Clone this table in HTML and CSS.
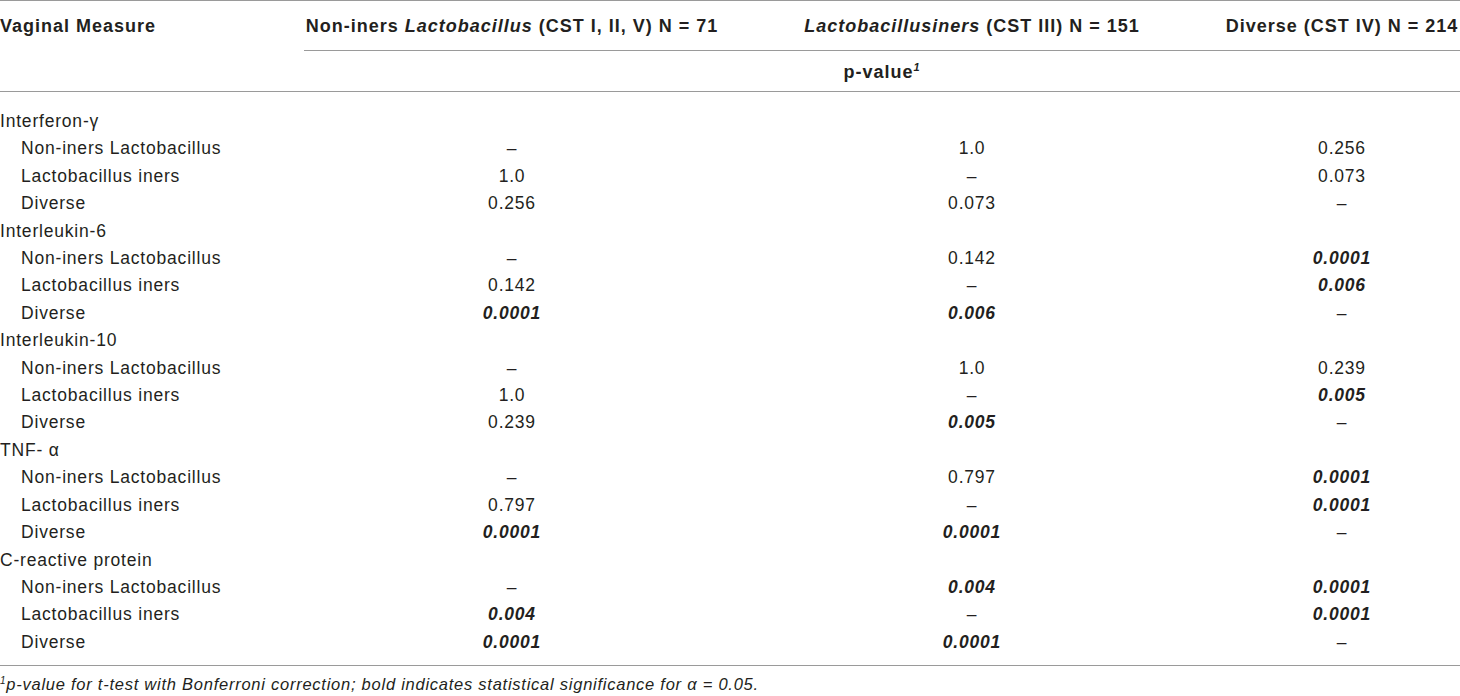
FILE: index.html
```html
<!DOCTYPE html>
<html lang="en">
<head>
    <meta charset="UTF-8">
    <title>Vaginal Measure p-values</title>
    <link rel="stylesheet" href="styles.css">
</head>
<body>
    <table class="pvals">
        <colgroup>
            <col class="col-label">
            <col class="col-a">
            <col class="col-b">
            <col class="col-c">
        </colgroup>
        <thead>
            <tr class="head-groups">
                <th class="label">Vaginal Measure</th>
                <th class="group">Non-iners <i>Lactobacillus</i> (CST I, II, V) N = 71</th>
                <th class="group"><i>Lactobacillusiners</i> (CST III) N = 151</th>
                <th class="group">Diverse (CST IV) N = 214</th>
            </tr>
            <tr class="head-sub">
                <th></th>
                <th colspan="3">p-value<sup>1</sup></th>
            </tr>
        </thead>
        <tbody>
            <tr class="measure first"><td colspan="4">Interferon-&gamma;</td></tr>
            <tr><td class="sub">Non-iners Lactobacillus</td><td>&ndash;</td><td>1.0</td><td>0.256</td></tr>
            <tr><td class="sub">Lactobacillus iners</td><td>1.0</td><td>&ndash;</td><td>0.073</td></tr>
            <tr><td class="sub">Diverse</td><td>0.256</td><td>0.073</td><td>&ndash;</td></tr>

            <tr class="measure"><td colspan="4">Interleukin-6</td></tr>
            <tr><td class="sub">Non-iners Lactobacillus</td><td>&ndash;</td><td>0.142</td><td class="sig">0.0001</td></tr>
            <tr><td class="sub">Lactobacillus iners</td><td>0.142</td><td>&ndash;</td><td class="sig">0.006</td></tr>
            <tr><td class="sub">Diverse</td><td class="sig">0.0001</td><td class="sig">0.006</td><td>&ndash;</td></tr>

            <tr class="measure"><td colspan="4">Interleukin-10</td></tr>
            <tr><td class="sub">Non-iners Lactobacillus</td><td>&ndash;</td><td>1.0</td><td>0.239</td></tr>
            <tr><td class="sub">Lactobacillus iners</td><td>1.0</td><td>&ndash;</td><td class="sig">0.005</td></tr>
            <tr><td class="sub">Diverse</td><td>0.239</td><td class="sig">0.005</td><td>&ndash;</td></tr>

            <tr class="measure"><td colspan="4">TNF- &alpha;</td></tr>
            <tr><td class="sub">Non-iners Lactobacillus</td><td>&ndash;</td><td>0.797</td><td class="sig">0.0001</td></tr>
            <tr><td class="sub">Lactobacillus iners</td><td>0.797</td><td>&ndash;</td><td class="sig">0.0001</td></tr>
            <tr><td class="sub">Diverse</td><td class="sig">0.0001</td><td class="sig">0.0001</td><td>&ndash;</td></tr>

            <tr class="measure"><td colspan="4">C-reactive protein</td></tr>
            <tr><td class="sub">Non-iners Lactobacillus</td><td>&ndash;</td><td class="sig">0.004</td><td class="sig">0.0001</td></tr>
            <tr><td class="sub">Lactobacillus iners</td><td class="sig">0.004</td><td>&ndash;</td><td class="sig">0.0001</td></tr>
            <tr class="last"><td class="sub">Diverse</td><td class="sig">0.0001</td><td class="sig">0.0001</td><td>&ndash;</td></tr>
        </tbody>
    </table>
    <p class="footnote"><sup>1</sup>p-value for t-test with Bonferroni correction; bold indicates statistical significance for &alpha; = 0.05.</p>
</body>
</html>
```

FILE: styles.css
```css
body {
    margin: 0;
    padding: 0;
    background: #fff;
    color: #231f20;
    font-family: 'Liberation Sans', Arial, sans-serif;
    font-size: 17.5px;
    letter-spacing: 0.8px;
}

.pvals {
    width: 1460px;
    border-collapse: collapse;
    table-layout: fixed;
}

.col-label { width: 304px; }
.col-a { width: 416px; }
.col-b { width: 504px; }
.col-c { width: 236px; }

.pvals th,
.pvals td {
    padding: 0;
    text-align: center;
    vertical-align: middle;
}

.pvals thead th {
    font-size: 18px;
    font-weight: bold;
    letter-spacing: 1px;
}

.head-groups th {
    height: 47px;
    border-top: 1px solid #9a9a9a;
    padding-top: 2px;
}

.head-groups th.group {
    border-bottom: 1px solid #9a9a9a;
}

.head-groups th.label {
    text-align: left;
}

.head-sub th {
    height: 37px;
    padding-top: 3px;
    border-bottom: 1px solid #9a9a9a;
}

.head-sub sup {
    font-style: italic;
    font-size: 11px;
    line-height: 0;
}

.pvals tbody td {
    height: 27.4px;
    line-height: 27.4px;
}

.pvals tbody tr.measure td {
    text-align: left;
}

.pvals tbody tr.first td {
    padding-top: 16px;
}

.pvals tbody tr.last td {
    padding-bottom: 9px;
    border-bottom: 1px solid #9a9a9a;
}

.pvals td.sub {
    text-align: left;
    padding-left: 21px;
}

.pvals td.sig {
    font-weight: bold;
    font-style: italic;
}

.footnote {
    margin: 9px 0 0;
    font-style: italic;
    font-size: 16.5px;
    letter-spacing: 0.75px;
}

.footnote sup {
    font-size: 10px;
    line-height: 0;
}
```
